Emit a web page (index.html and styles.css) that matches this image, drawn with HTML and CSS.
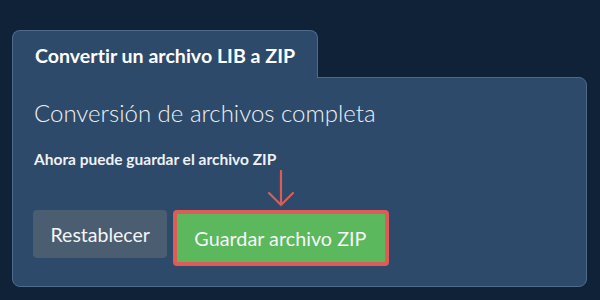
FILE: index.html
```html
<!DOCTYPE html>
<html lang="es">
<head>
<meta charset="utf-8">
<title>Convertir un archivo LIB a ZIP</title>
<link rel="stylesheet" href="styles.css">
</head>
<body>
<div class="wrap">
  <div class="tab">Convertir un archivo LIB a ZIP</div>
  <div class="panel">
    <h2 class="heading">Conversión de archivos completa</h2>
    <p class="sub">Ahora puede guardar el archivo ZIP</p>
    <div class="actions">
      <button class="btn btn-reset">Restablecer</button>
      <div class="save-wrap">
        <svg class="arrow" width="28" height="38" viewBox="0 0 28 38" aria-hidden="true">
          <path d="M14 1 V35 M2 23 L14 35 L26 23" fill="none" stroke="#de5b57" stroke-width="2.2" stroke-linecap="round" stroke-linejoin="miter"/>
        </svg>
        <button class="btn btn-save">Guardar archivo ZIP</button>
      </div>
    </div>
  </div>
</div>
</body>
</html>
```

FILE: styles.css
```css
html, body {
  margin: 0;
  padding: 0;
  background: #0f2238;
  width: 600px;
  height: 300px;
  overflow: hidden;
  font-family: Lato, "Noto Sans", sans-serif;
  font-variant-ligatures: no-common-ligatures;
  color: #f2f4f7;
}

.wrap {
  padding: 30px 13px 0 12px;
  display: flex;
  flex-direction: column;
  align-items: flex-start;
}

.tab {
  position: relative;
  z-index: 2;
  background: #2d4a6a;
  border: 1px solid #4f6a8a;
  border-bottom: none;
  border-radius: 8px 8px 0 0;
  padding: 13px 22px 10px 22px;
  margin-bottom: -1px;
  font-size: 19.6px;
  font-weight: 700;
  line-height: 24px;
  color: #ffffff;
}

.panel {
  align-self: stretch;
  background: #2d4a6a;
  border: 1px solid #4f6a8a;
  border-radius: 0 8px 8px 8px;
  padding: 20px 21px 20px 20px;
}

.heading {
  margin: 0 0 0 1px;
  font-size: 24px;
  font-weight: 300;
  line-height: 30px;
  color: #eef1f5;
}

.sub {
  margin: 22px 0 0 1px;
  font-size: 15.5px;
  font-weight: 700;
  line-height: 18px;
  color: #eef1f5;
}

.actions {
  margin-top: 42px;
  display: flex;
  align-items: flex-start;
  gap: 6px;
}

.btn {
  font-family: Lato, "Noto Sans", sans-serif;
  font-variant-ligatures: no-common-ligatures;
  font-size: 19.5px;
  font-weight: 400;
  color: #f4f6f8;
  height: 48px;
  padding: 0 17px;
  border: none;
  border-radius: 4px;
  cursor: pointer;
}

.btn-reset {
  background: #4b5d70;
  padding: 0 17.5px;
}

.save-wrap {
  position: relative;
  display: flex;
}

.btn-save {
  background: #5cb85c;
  border: 4px solid #de5b57;
  box-sizing: content-box;
  font-size: 19.8px;
  padding: 0 19px 0 17px;
}

.arrow {
  position: absolute;
  left: 50%;
  top: -40px;
  transform: translateX(-50%);
}
```
